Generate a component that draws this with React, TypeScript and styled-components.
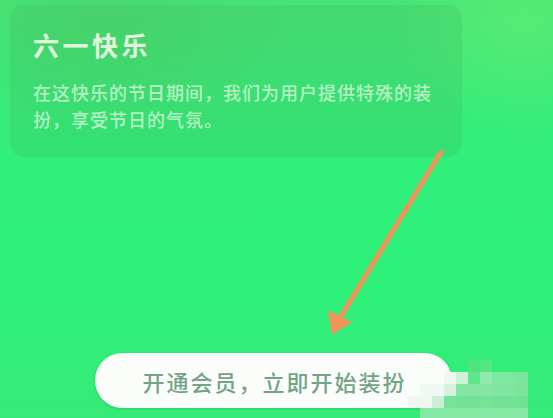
import React from "react";
import styled, { createGlobalStyle } from "styled-components";

const Global = createGlobalStyle`
  html, body { margin: 0; padding: 0; }
  body { width: 553px; height: 418px; overflow: hidden; }
  #root { width: 553px; height: 418px; }
`;

const Page = styled.div`
  position: relative;
  width: 553px;
  height: 418px;
  overflow: hidden;
  display: flex;
  flex-direction: column;
  box-sizing: border-box;
  padding: 5px 0 10px 0;
  background:
    radial-gradient(ellipse 260px 160px at 20% 5%, rgba(80, 200, 100, 0.35), transparent 70%),
    radial-gradient(ellipse 200px 160px at 95% 5%, rgba(110, 240, 120, 0.45), transparent 70%),
    linear-gradient(180deg, #45e574 0%, #2ef07a 42%, #2ef17a 70%, #36ea78 100%);
  font-family: "Noto Sans CJK SC", "Noto Sans", sans-serif;
`;

const Card = styled.section`
  width: 452px;
  height: 152px;
  margin-left: 10px;
  box-sizing: border-box;
  padding: 23px 0 0 23px;
  border-radius: 14px;
  background: rgba(70, 150, 85, 0.14);
  display: flex;
  flex-direction: column;
`;

const Title = styled.h1`
  margin: 0;
  font-size: 26px;
  line-height: 34px;
  font-weight: 700;
  letter-spacing: 3.5px;
  color: #e2f5dc;
`;

const Desc = styled.p`
  margin: 17px 0 0 0;
  width: 408px;
  font-size: 18px;
  line-height: 27px;
  letter-spacing: 1px;
  font-weight: 500;
  color: rgba(226, 248, 226, 0.74);
`;

const Spacer = styled.div`
  flex: 1;
`;

const ButtonRow = styled.div`
  display: flex;
  justify-content: center;
  padding-right: 6px;
`;

const JoinButton = styled.button`
  width: 357px;
  height: 55px;
  border: none;
  border-radius: 28px;
  background: #fbfdfb;
  box-shadow: 0 1px 3px rgba(20, 120, 60, 0.25);
  font-family: "Noto Sans CJK SC", "Noto Sans", sans-serif;
  font-size: 22px;
  font-weight: 500;
  letter-spacing: 2px;
  color: #74a486;
  padding: 0 0 0 2px;
`;

const ArrowLayer = styled.svg`
  position: absolute;
  left: 0;
  top: 0;
  pointer-events: none;
`;

const Mosaic = styled.div`
  position: absolute;
  left: 408px;
  top: 360px;
  display: grid;
  grid-template-columns: repeat(10, 12px);
  grid-auto-rows: 12px;
`;

const Cell = styled.div<{ $c: string }>`
  background: ${(p) => p.$c};
`;

const T = "transparent";
const mosaicColors: string[] = [
  T, T, T, T, T, "#4ee57f", "#55e684", T, T, T,
  T, T, T, "#eef8f1", "#cdf2d8", "#62e48b", "#8fe9aa", "#7fe7a0", "#7fe7a0", "#7ce69e",
  T, "#f1f8f3", "#f1f8f3", "#d4f3dd", "#84e6a3", "#82e6a2", "#84e6a3", "#7fe5a0", "#7fe5a0", "#7be59d",
  "#eff7f1", "#eff7f1", "#c9f0d3", "#76e498", "#72e396", "#72e396", "#74e497", "#72e396", "#72e396", "#70e294",
  T, "#84e7a3", "#84e7a3", "#84e7a3", "#84e7a3", "#84e7a3", "#84e7a3", "#84e7a3", "#84e7a3", "#84e7a3",
];

export default function App() {
  return (
    <>
      <Global />
      <Page>
        <Card>
          <Title>六一快乐</Title>
          <Desc>在这快乐的节日期间，我们为用户提供特殊的装扮，享受节日的气氛。</Desc>
        </Card>
        <Spacer />
        <ButtonRow>
          <JoinButton>开通会员，立即开始装扮</JoinButton>
        </ButtonRow>
        <ArrowLayer width="553" height="418" viewBox="0 0 553 418">
          <line x1="441" y1="152" x2="340" y2="318" stroke="#f2935a" strokeWidth="5" strokeLinecap="round" />
          <polygon points="332,335 328,310 352,322" fill="#f2935a" />
        </ArrowLayer>
        <Mosaic>
          {mosaicColors.map((c, i) => (
            <Cell key={i} $c={c} />
          ))}
        </Mosaic>
      </Page>
    </>
  );
}
